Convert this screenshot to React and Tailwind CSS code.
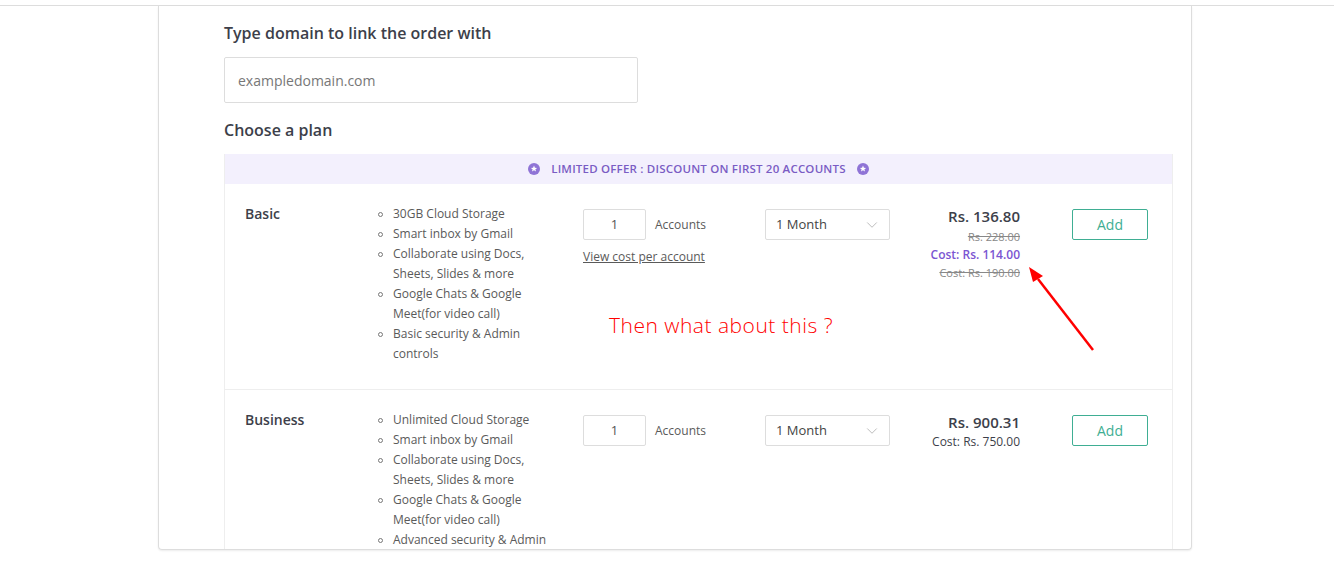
import { ChevronDown } from 'lucide-react';

const plans = [
    {
        name: 'Basic',
        features: [
            '30GB Cloud Storage',
            'Smart inbox by Gmail',
            'Collaborate using Docs, Sheets, Slides & more',
            'Google Chats & Google Meet(for video call)',
            'Basic security & Admin controls',
        ],
        price: 'Rs. 136.80',
        oldPrice: 'Rs. 228.00',
        cost: 'Cost: Rs. 114.00',
        oldCost: 'Cost: Rs. 190.00',
        showLink: true,
    },
    {
        name: 'Business',
        features: [
            'Unlimited Cloud Storage',
            'Smart inbox by Gmail',
            'Collaborate using Docs, Sheets, Slides & more',
            'Google Chats & Google Meet(for video call)',
            'Advanced security & Admin controls',
        ],
        price: 'Rs. 900.31',
        cost: 'Cost: Rs. 750.00',
    },
];

const StarBadge = () => (
    <svg width="12" height="12" viewBox="0 0 12 12">
        <circle cx="6" cy="6" r="6" fill="#8f74d6" />
        <path
            d="M6 2.6 L6.9 4.8 L9.2 4.9 L7.4 6.3 L8 8.6 L6 7.3 L4 8.6 L4.6 6.3 L2.8 4.9 L5.1 4.8 Z"
            fill="#ffffff"
        />
    </svg>
);

const PlanRow = ({ plan }) => {
    return (
        <div className="flex pl-[20px] pt-[20px] pb-[25px] border-b border-[#eeeeee]">
            <div className="w-[133px] text-[14px] leading-[20px] font-semibold text-[#3d3f4a]">
                {plan.name}
            </div>
            <ul className="w-[205px] text-[12px] leading-[20px] text-[#5a5a5a]">
                {plan.features.map((f) => (
                    <li key={f} className="flex">
                        <span className="w-[15px] shrink-0 flex items-start pt-[8px]">
                            <span className="w-[5px] h-[5px] rounded-full border border-[#777]" />
                        </span>
                        <span className="w-[160px]">{f}</span>
                    </li>
                ))}
            </ul>
            <div className="w-[182px] pt-[5px]">
                <div className="flex items-center">
                    <div className="w-[63px] h-[31px] border border-[#dddddd] rounded-[2px] flex items-center justify-center text-[13px] text-[#555]">
                        1
                    </div>
                    <span className="ml-[9px] text-[12px] text-[#5a5a5a]">
                        Accounts
                    </span>
                </div>
                {plan.showLink && (
                    <div className="mt-[8px] text-[12px] leading-[18px] text-[#5a5a5a] underline">
                        View cost per account
                    </div>
                )}
            </div>
            <div className="w-[125px] pt-[5px]">
                <div className="h-[31px] border border-[#dddddd] rounded-[2px] flex items-center justify-between pl-[10px] pr-[8px] text-[13px] text-[#444]">
                    <span>1 Month</span>
                    <ChevronDown
                        className="w-[18px] h-[18px] text-[#b5b5b5]"
                        strokeWidth={1.2}
                    />
                </div>
            </div>
            <div className="w-[130px] pt-[1px] text-right">
                <div className="text-[15px] leading-[22px] font-semibold text-[#3d3f4a]">
                    {plan.price}
                </div>
                {plan.oldPrice && (
                    <div className="mt-[1px] text-[11px] leading-[18px] text-[#888] line-through">
                        {plan.oldPrice}
                    </div>
                )}
                <div
                    className={
                        plan.oldCost
                            ? 'text-[12px] leading-[18px] font-semibold text-[#7b55d2]'
                            : 'text-[12px] leading-[18px] text-[#3d3f4a]'
                    }
                >
                    {plan.cost}
                </div>
                {plan.oldCost && (
                    <div className="text-[11px] leading-[18px] text-[#888] line-through">
                        {plan.oldCost}
                    </div>
                )}
            </div>
            <div className="ml-[52px] pt-[5px]">
                <button className="w-[76px] h-[31px] border border-[#3fae93] rounded-[2px] text-[14px] text-[#3fae93]">
                    Add
                </button>
            </div>
        </div>
    );
};

export default function App() {
    return (
        <div
            className="relative w-[1334px] h-[570px] bg-white overflow-hidden"
            style={{ fontFamily: '"Open Sans", "Liberation Sans", sans-serif' }}
        >
            <div className="h-[6px] border-b border-[#dddddd]" />
            <div className="ml-[158px] w-[1034px] h-[544px] border-x border-b border-[#dddddd] rounded-b-[4px] shadow-[0_1px_2px_rgba(0,0,0,0.08)] overflow-hidden">
                <div className="pl-[65px] pr-[18px] pt-[15px]">
                    <h2 className="text-[16px] leading-[24px] font-semibold text-[#3d3f4a]">
                        Type domain to link the order with
                    </h2>
                    <div className="mt-[12px] w-[414px] h-[46px] border border-[#dddddd] rounded-[2px] flex items-center pl-[13px] text-[14px] text-[#777]">
                        exampledomain.com
                    </div>
                    <h3 className="mt-[15px] text-[16px] leading-[24px] font-semibold text-[#3d3f4a]">
                        Choose a plan
                    </h3>
                    <div className="mt-[12px] border-x border-[#eeeeee]">
                        <div className="h-[30px] bg-[#f3f0fd] flex items-center justify-center gap-[11px] text-[11.5px] font-semibold tracking-[0.2px] text-[#7a5cc4]">
                            <StarBadge />
                            <span>LIMITED OFFER : DISCOUNT ON FIRST 20 ACCOUNTS</span>
                            <StarBadge />
                        </div>
                        {plans.map((p) => (
                            <PlanRow key={p.name} plan={p} />
                        ))}
                    </div>
                </div>
            </div>

            <div className="absolute left-[609px] top-[311px] text-[21px] leading-[28px] font-light tracking-[0.5px] text-[#ff0000]">
                Then what about this ?
            </div>
            <svg
                className="absolute left-0 top-0 pointer-events-none"
                width="1334"
                height="570"
            >
                <line
                    x1="1093"
                    y1="350"
                    x2="1038"
                    y2="279"
                    stroke="#ff0000"
                    strokeWidth="2.5"
                />
                <polygon points="1029,267 1043,276 1033,282" fill="#ff0000" />
            </svg>
        </div>
    );
}
